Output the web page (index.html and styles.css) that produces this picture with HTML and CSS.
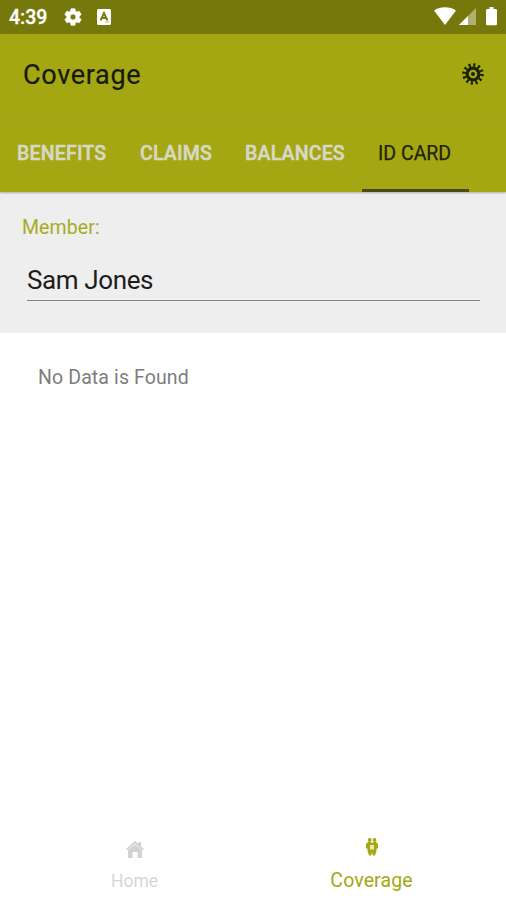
FILE: index.html
```html
<!DOCTYPE html>
<html lang="en">
<head>
<meta charset="utf-8">
<title>Coverage</title>
<link rel="stylesheet" href="styles.css">
</head>
<body>
<header class="status">
  <span class="time">4:39</span>
  <svg class="status-gear" width="20" height="20" viewBox="0 0 24 24"><path fill="#fff" stroke="#fff" stroke-width=".8" d="M19.43 12.98c.04-.32.07-.64.07-.98s-.03-.66-.07-.98l2.11-1.65c.19-.15.24-.42.12-.64l-2-3.46c-.12-.22-.39-.3-.61-.22l-2.49 1c-.52-.4-1.08-.73-1.69-.98l-.38-2.65C14.46 2.18 14.25 2 14 2h-4c-.25 0-.46.18-.49.42l-.38 2.65c-.61.25-1.17.59-1.69.98l-2.49-1c-.23-.09-.49 0-.61.22l-2 3.46c-.13.22-.07.49.12.64l2.11 1.65c-.04.32-.07.65-.07.98s.03.66.07.98l-2.11 1.65c-.19.15-.24.42-.12.64l2 3.46c.12.22.39.3.61.22l2.49-1c.52.4 1.08.73 1.69.98l.38 2.65c.03.24.24.42.49.42h4c.25 0 .46-.18.49-.42l.38-2.65c.61-.25 1.17-.59 1.69-.98l2.49 1c.23.09.49 0 .61-.22l2-3.46c.12-.22.07-.49-.12-.64l-2.11-1.65zM12 15.5c-1.93 0-3.5-1.57-3.5-3.5s1.57-3.5 3.5-3.5 3.5 1.57 3.5 3.500-1.570 3.500-3.500 3.500z"/></svg>
  <svg class="keyboard" width="14" height="16" viewBox="0 0 14 16"><rect width="14" height="16" rx="1.5" fill="#fff"/><path d="M3.500 11.500 7 4l3.500 7.500M5 9h4" fill="none" stroke="#77780b" stroke-width="1.800"/><path d="M8 13h4" stroke="#b5b67a"/></svg>
  <svg class="signals" width="64" height="20" viewBox="0 0 64 20"><path fill="#fff" d="M0 3.5C6-.8 16-.8 22 3.5L11 18z"/><path fill="#fff" fill-opacity=".42" d="M25 18 42 1v17z"/><path fill="#fff" d="M25 18l9-9v9z"/><path fill="#fff" d="M55.500 0h4v2h2.200q1.300 0 1.300 1.300V17q0 1.300-1.300 1.300h-8.400Q52 18.300 52 17V3.300Q52 2 53.300 2h2.200z"/></svg>
</header>
<div class="toolbar">
  <h1>Coverage</h1>
  <svg width="24" height="24" viewBox="0 0 24 24"><g fill="none" stroke="#1c2109"><circle cx="12" cy="12" r="5.900" stroke-width="3.200"/><circle cx="12" cy="12" r="9" stroke-width="3.600" stroke-dasharray="2.100 2.612"/></g><circle cx="12" cy="12" r="2" fill="#1c2109"/></svg>
</div>
<nav class="tabs">
  <span class="tab benefits">BENEFITS</span>
  <span class="tab claims">CLAIMS</span>
  <span class="tab balances">BALANCES</span>
  <span class="tab active">ID CARD</span>
</nav>
<section class="member">
  <label>Member:</label>
  <div class="field">Sam Jones</div>
</section>
<main>No Data is Found</main>
<nav class="bottom">
  <div class="item home">
    <svg width="20" height="20" viewBox="0 0 20 20"><path fill="#d2d2d2" d="M10 1 1 9l1.200 1.300L10 3.800l7.800 6.500L19 9l-3-2.700V2h-3v1.700z"/><path fill="#d2d2d2" d="M3 10 10 4.500 17 10v8h-4.500v-6h-5v6H3z"/></svg>
    <span>Home</span>
  </div>
  <div class="item coverage">
    <svg width="14" height="20" viewBox="0 0 14 20"><g fill="#a4a812"><circle cx="4.700" cy="3" r="1.900"/><circle cx="9.500" cy="3" r="1.900"/><path d="M3 5h3l1 1.500L8 5h3l2 2v4.500h-1.500V14L10 18.500H7.800L7 15l-.8 3.500H4L2.500 14v-2.500H1V7z"/></g><path d="M5 8h4v4.500H5z" fill="#e5e8b5"/></svg>
    <span>Coverage</span>
  </div>
</nav>
</body>
</html>
```

FILE: styles.css
```css
* { box-sizing: border-box; }
body { margin: 0; height: 900px; display: flex; flex-direction: column; background: #fff; font-family: Roboto, sans-serif; overflow: hidden; }
svg { display: block; flex: none; }
.status { height: 34px; background: #77780b; display: flex; align-items: center; padding: 0 8px 0 9px; color: #fff; }
.time { width: 54px; font-size: 19.5px; font-weight: 500; line-height: 34px; padding-top: 2px; -webkit-text-stroke: .3px #fff; }
.keyboard { margin-left: 14px; }
.signals { margin-left: auto; }
.toolbar { height: 80px; background: #a4a612; display: flex; align-items: center; justify-content: space-between; padding: 0 21px 0 23px; }
h1 { margin: 2px 0 0; font-size: 27px; font-weight: 400; letter-spacing: .68px; color: #17190b; -webkit-text-stroke: .2px #17190b; }
.tabs { height: 78px; background: #a4a612; display: flex; line-height: 80px; box-shadow: 0 1px 2px #aaa; position: relative; font-size: 19.5px; font-weight: 500; color: #d8d8c6; white-space: nowrap; }
.tab { padding-left: 17px; letter-spacing: .2px; -webkit-text-stroke: .5px #d8d8c6; }
.benefits { width: 123px; }
.claims { width: 105px; }
.balances { width: 134px; }
.active { width: 107px; padding-left: 16px; color: #22240c; font-weight: 400; letter-spacing: 0; -webkit-text-stroke: .25px #22240c; border-bottom: 3px solid #4b4b16; }
.member { height: 141px; background: #eee; padding: 23px 26px 0 27px; }
label { display: block; margin-left: -5px; height: 26px; line-height: 26px; font-size: 19.5px; letter-spacing: .1px; color: #a8ac25; }
.field { margin-top: 15px; height: 45px; line-height: 49px; border-bottom: 1px solid #858585; color: #1c1c1c; font-size: 26px; letter-spacing: -.38px; }
main { flex: 1; padding: 32px 38px; line-height: 26px; font-size: 19.5px; color: #7d7d7d; letter-spacing: .12px; }
.bottom { height: 70px; display: flex; padding: 0 16px; }
.item { width: 237px; display: flex; flex-direction: column; align-items: center; }
.item span { line-height: 24px; }
.home { padding-top: 10px; color: #d6d6d6; font-size: 17.5px; }
.home span { margin-top: 9px; }
.coverage { padding-top: 7px; color: #a4a812; font-size: 19.5px; }
.coverage span { margin-top: 12px; letter-spacing: .1px; }
```
